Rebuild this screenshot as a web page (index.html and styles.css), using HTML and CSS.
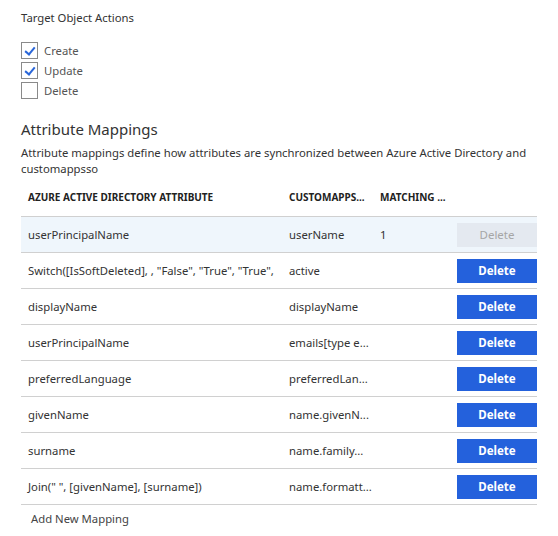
FILE: index.html
```html
<!DOCTYPE html>
<html lang="en">
<head>
    <meta charset="UTF-8">
    <title>Attribute Mappings</title>
    <link rel="stylesheet" href="styles.css">
</head>
<body>

    <div class="section-label">Target Object Actions</div>

    <div class="actions">
        <label class="check-row"><span class="box checked"></span>Create</label>
        <label class="check-row"><span class="box checked"></span>Update</label>
        <label class="check-row"><span class="box"></span>Delete</label>
    </div>

    <h2>Attribute Mappings</h2>
    <p class="desc">Attribute mappings define how attributes are synchronized between Azure Active Directory and customappsso</p>

    <div class="grid">
        <div class="row head">
            <div class="cell">Azure Active Directory Attribute</div>
            <div class="cell">customapps...</div>
            <div class="cell">Matching ...</div>
            <div class="cell"></div>
        </div>
        <div class="row selected">
            <div class="cell">userPrincipalName</div>
            <div class="cell">userName</div>
            <div class="cell">1</div>
            <div class="cell"><button class="del" disabled>Delete</button></div>
        </div>
        <div class="row">
            <div class="cell">Switch([IsSoftDeleted], , "False", "True", "True",</div>
            <div class="cell">active</div>
            <div class="cell"></div>
            <div class="cell"><button class="del">Delete</button></div>
        </div>
        <div class="row">
            <div class="cell">displayName</div>
            <div class="cell">displayName</div>
            <div class="cell"></div>
            <div class="cell"><button class="del">Delete</button></div>
        </div>
        <div class="row">
            <div class="cell">userPrincipalName</div>
            <div class="cell">emails[type e...</div>
            <div class="cell"></div>
            <div class="cell"><button class="del">Delete</button></div>
        </div>
        <div class="row">
            <div class="cell">preferredLanguage</div>
            <div class="cell">preferredLan...</div>
            <div class="cell"></div>
            <div class="cell"><button class="del">Delete</button></div>
        </div>
        <div class="row">
            <div class="cell">givenName</div>
            <div class="cell">name.givenN...</div>
            <div class="cell"></div>
            <div class="cell"><button class="del">Delete</button></div>
        </div>
        <div class="row">
            <div class="cell">surname</div>
            <div class="cell">name.family...</div>
            <div class="cell"></div>
            <div class="cell"><button class="del">Delete</button></div>
        </div>
        <div class="row">
            <div class="cell">Join(" ", [givenName], [surname])</div>
            <div class="cell">name.formatt...</div>
            <div class="cell"></div>
            <div class="cell"><button class="del">Delete</button></div>
        </div>
    </div>

    <div class="add-link">Add New Mapping</div>

</body>
</html>
```

FILE: styles.css
```css
body {
    font-family: "Noto Sans", "Open Sans", sans-serif;
    font-size: 11.3px;
    color: #333;
    margin: 0;
    padding: 10px 21px 0 21px;
    background: #fff;
}
.section-label {
    line-height: 16px;
    color: #333;
}
.actions {
    margin-top: 14px;
}
.check-row {
    display: flex;
    align-items: center;
    height: 20px;
    color: #555;
}
.box {
    width: 15px;
    height: 15px;
    border: 1px solid #8a8a8a;
    margin-right: 6px;
    position: relative;
    box-sizing: content-box;
}
.box.checked::after {
    content: "";
    position: absolute;
    left: 5px;
    top: 2px;
    width: 4px;
    height: 8px;
    border: solid #2a66d8;
    border-width: 0 2px 2px 0;
    transform: rotate(40deg);
}
h2 {
    font-size: 15px;
    font-weight: normal;
    margin: 18px 0 0 0;
    line-height: 22px;
    color: #333;
}
.desc {
    margin: 5px 0 0 0;
    line-height: 16px;
    color: #333;
}
.grid {
    width: 516px;
    margin-top: 0;
}
.row {
    display: grid;
    grid-template-columns: 261px 91px 84px 80px;
    height: 36px;
    align-items: center;
    border-bottom: 1px solid #d0d0d0;
    box-sizing: border-box;
}
.row.head {
    height: 40px;
    font-size: 10px;
    font-weight: bold;
    text-transform: uppercase;
    color: #222;
}
.row.selected {
    background: #eff6fc;
}
.cell {
    padding-left: 7px;
    white-space: nowrap;
    overflow: hidden;
}
.row .cell:last-child {
    padding-left: 0;
}
.del {
    width: 80px;
    height: 24px;
    border: none;
    background: #2461dc;
    color: #fff;
    font-family: "Noto Sans", "Open Sans", sans-serif;
    font-size: 11.5px;
    font-weight: bold;
    display: block;
}
.del:disabled {
    background: #e4e9f0;
    color: #a6a6a6;
    font-weight: normal;
}
.add-link {
    padding-left: 10px;
    margin-top: 6px;
    line-height: 16px;
    color: #444;
}
```
